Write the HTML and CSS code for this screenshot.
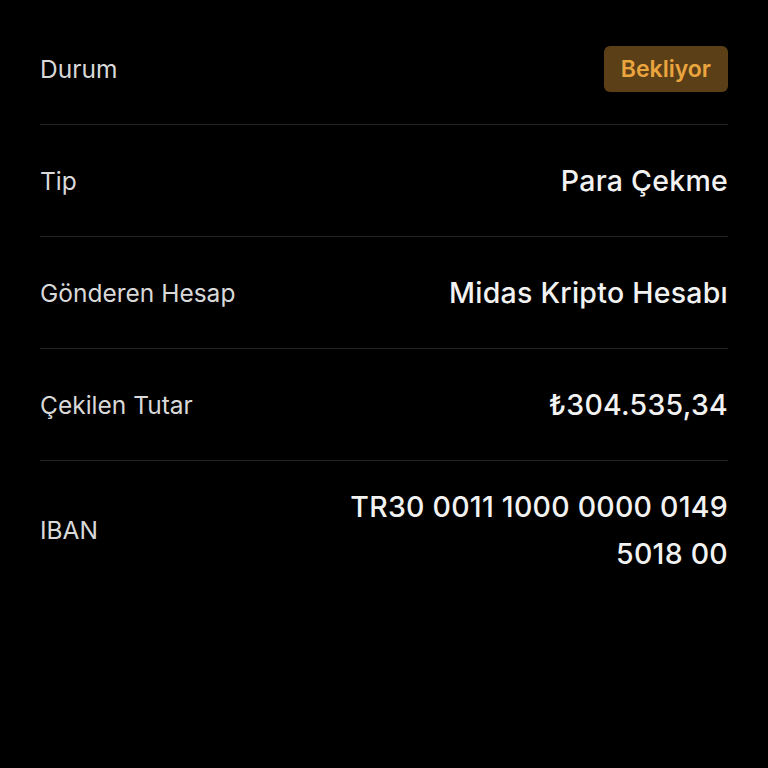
FILE: index.html
```html
<!DOCTYPE html>
<html lang="tr">
<head>
    <meta charset="UTF-8">
    <meta name="viewport" content="width=device-width, initial-scale=1.0">
    <title>İşlem Detayı</title>
    <link rel="stylesheet" href="styles.css">
</head>
<body>

<div class="detail-list">
    <div class="detail-row">
        <span class="detail-label">Durum</span>
        <span class="status-badge">Bekliyor</span>
    </div>
    <div class="detail-row">
        <span class="detail-label">Tip</span>
        <span class="detail-value">Para Çekme</span>
    </div>
    <div class="detail-row">
        <span class="detail-label">Gönderen Hesap</span>
        <span class="detail-value">Midas Kripto Hesabı</span>
    </div>
    <div class="detail-row">
        <span class="detail-label">Çekilen Tutar</span>
        <span class="detail-value">₺304.535,34</span>
    </div>
    <div class="detail-row last">
        <span class="detail-label">IBAN</span>
        <span class="detail-value iban">TR30 0011 1000 0000 0149 5018 00</span>
    </div>
</div>

</body>
</html>
```

FILE: styles.css
```css
:root {
    --bg-color: #000000;
    --label-color: #d9d9d9;
    --value-color: #f2f2f2;
    --divider: #232323;
    --badge-bg: #5b3f17;
    --badge-text: #eba53e;
}

* { margin: 0; padding: 0; box-sizing: border-box; }

body {
    font-family: Inter, "Noto Sans", sans-serif;
    background-color: var(--bg-color);
    color: var(--value-color);
    padding: 13px 40px 0;
}

.detail-row {
    display: flex;
    justify-content: space-between;
    align-items: center;
    min-height: 112px;
    border-bottom: 1px solid var(--divider);
    gap: 24px;
}
.detail-row.last { border-bottom: none; padding: 22px 0; }

.detail-label {
    font-size: 24.5px;
    color: var(--label-color);
    white-space: nowrap;
}

.detail-value {
    font-size: 28.5px;
    font-weight: 500;
    letter-spacing: 0.25px;
    text-align: right;
}
.detail-value.iban { max-width: 400px; line-height: 47px; }

.status-badge {
    background-color: var(--badge-bg);
    color: var(--badge-text);
    font-size: 23px;
    font-weight: 600;
    padding: 0 17px;
    height: 46px;
    line-height: 46px;
    border-radius: 6px;
}
```
